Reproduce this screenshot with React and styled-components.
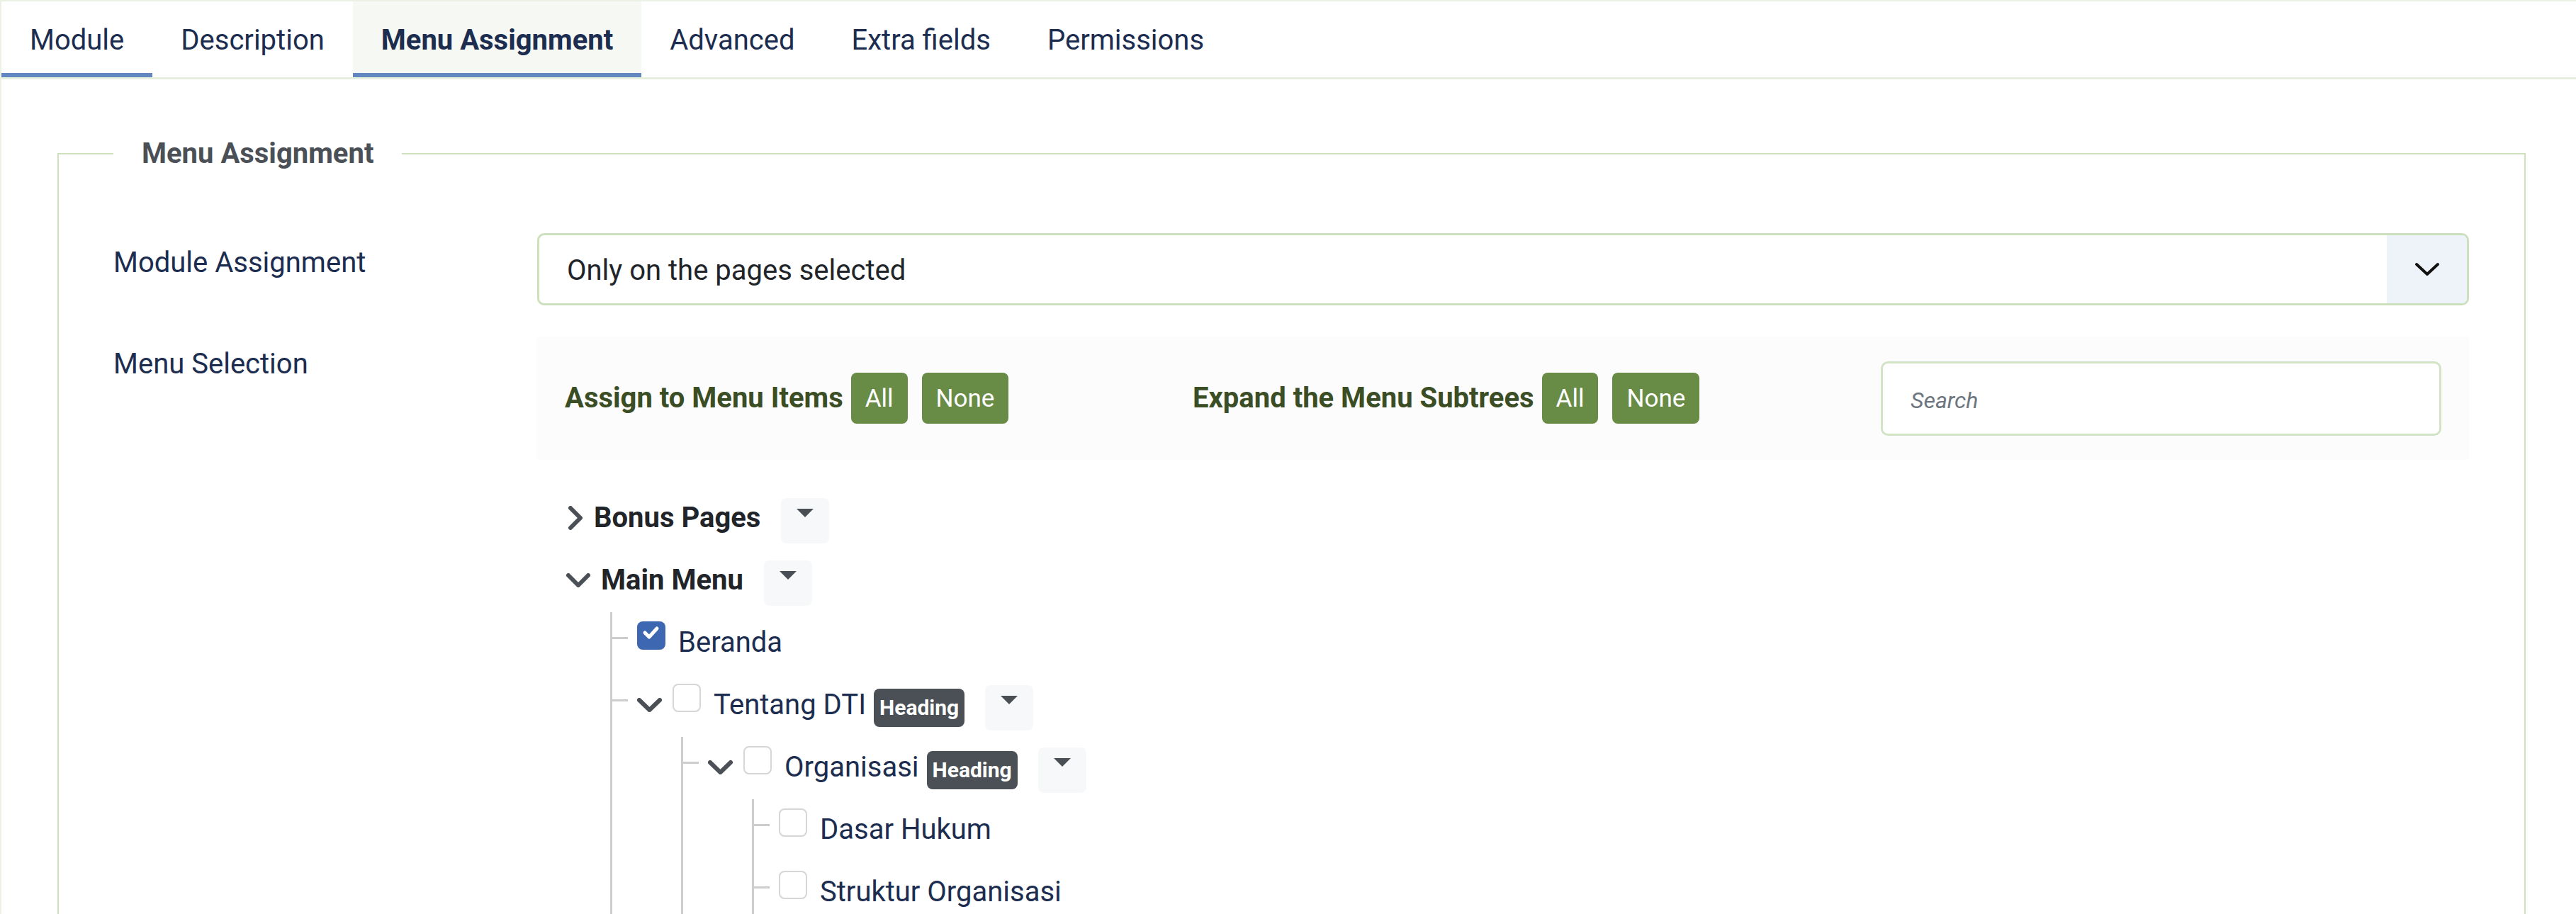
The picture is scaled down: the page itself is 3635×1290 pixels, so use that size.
import React from "react";
import styled, { createGlobalStyle } from "styled-components";

const GlobalStyle = createGlobalStyle`
  * { box-sizing: border-box; }
  html, body {
    margin: 0;
    padding: 0;
    background: #fff;
  }
  body {
    font-family: Roboto, "Liberation Sans", Arial, sans-serif;
    font-size: 40px;
    line-height: 1.5;
    color: #212529;
  }
`;

const Page = styled.div`
  border-top: 2px solid #ebf1e5;
  border-left: 2px solid #ebf1e5;
`;

const TabList = styled.div`
  display: flex;
  border-bottom: 3px solid #e6eedd;
`;

const Tab = styled.div`
  height: 107px;
  padding: 3px 40px 0;
  display: flex;
  align-items: center;
  font-size: 40px;
  color: #1c2d50;
  font-weight: ${(p) => (p.$active ? 700 : 400)};
  background: ${(p) => (p.$active ? "#f6f8f3" : "transparent")};
  box-shadow: ${(p) => (p.$marked ? "inset 0 -6px 0 #6286c0" : "none")};
`;

const Fieldset = styled.fieldset`
  margin: 75px 71px 0 79px;
  padding: 0 78px 0 77px;
  border: 2px solid #cfe1bf;
  min-width: 0;
`;

const Legend = styled.legend`
  padding: 0 40px;
  font-size: 40px;
  line-height: 60px;
  font-weight: 700;
  color: #4b5057;
`;

const Form = styled.div`
  padding-top: 82px;
`;

const FormRow = styled.div`
  display: grid;
  grid-template-columns: 598px 1fr;
  margin-bottom: 44px;
`;

const Label = styled.div`
  padding-top: ${(p) => p.$top || 12}px;
  line-height: 60px;
  color: #1c2d50;
`;

const Select = styled.div`
  height: 102px;
  display: flex;
  align-items: stretch;
  border: 3px solid #cde0bd;
  border-radius: 10px;
  overflow: hidden;
`;

const SelectValue = styled.div`
  flex: 1;
  display: flex;
  align-items: center;
  padding: 3px 0 0 39px;
  color: #212529;
`;

const SelectArrow = styled.div`
  width: 113px;
  background: #eef2f9;
  display: flex;
  align-items: center;
  justify-content: center;
`;

const Panel = styled.div`
  height: 174px;
  padding: 0 39px;
  background: #fcfcfc;
  display: flex;
  align-items: center;
`;

const Section = styled.div`
  display: flex;
  align-items: center;
  flex: 0 0 ${(p) => p.$width || "auto"};
`;

const SectionLabel = styled.span`
  font-weight: 700;
  color: #3b4d24;
  margin-right: 11px;
`;

const SmallButton = styled.button`
  height: 72px;
  padding: 0 20px;
  margin-right: 20px;
  border: none;
  border-radius: 8px;
  background: #688b46;
  color: #fff;
  font-family: inherit;
  font-size: 35px;
  line-height: 1;
`;

const SearchInput = styled.input`
  margin-left: auto;
  width: 791px;
  height: 105px;
  border: 3px solid #d3e3c5;
  border-radius: 10px;
  padding: 6px 0 0 39px;
  font-family: inherit;
  font-size: 32px;
  font-style: italic;
  background: #fff;
  outline: none;
  &::placeholder {
    color: #6d757e;
  }
`;

const Tree = styled.ul`
  list-style: none;
  margin: 39px 0 0 0;
  padding: 0 0 0 41px;
`;

const SubTree = styled.ul`
  list-style: none;
  margin: 0 0 0 ${(p) => p.$indent}px;
  padding: 0;
  border-left: 3px solid #cdcdcd;
`;

const Item = styled.li``;

const Row = styled.div`
  display: flex;
  align-items: flex-start;
  padding: 13px 0 9px;
  min-height: 88px;
`;

const Tick = styled.span`
  width: 22px;
  height: 3px;
  margin-top: 22px;
  margin-right: 13px;
  background: #cdcdcd;
  flex: none;
`;

const ChevronBox = styled.span`
  height: 60px;
  display: flex;
  align-items: center;
  margin-left: ${(p) => p.$offset || 0}px;
  margin-right: 15px;
  flex: none;
`;

const Checkbox = styled.span`
  width: 40px;
  height: 40px;
  border-radius: 8px;
  flex: none;
  margin-right: 18px;
  background: ${(p) => (p.$checked ? "#3e67b1" : "#fff")};
  border: ${(p) => (p.$checked ? "none" : "2px solid #d4d6d8")};
  display: flex;
`;

const ItemText = styled.span`
  line-height: 60px;
  white-space: nowrap;
  font-weight: ${(p) => (p.$menu ? 700 : 400)};
  color: ${(p) => (p.$menu ? "#212529" : "#1c2d50")};
`;

const Badge = styled.span`
  margin: 7px 0 0 11px;
  height: 54px;
  padding: 0 8px;
  border-radius: 8px;
  background: #4b4f56;
  color: #fff;
  font-size: 30px;
  font-weight: 700;
  line-height: 54px;
`;

const Toggle = styled.span`
  margin: 2px 0 0 29px;
  width: 68px;
  height: 64px;
  border-radius: 8px;
  background: #f7f8fa;
  display: flex;
  justify-content: center;
  padding-top: 15px;
  flex: none;
`;

const ChevronDown = ({ width = 34, color = "#4b4f56", stroke = 6 }) => (
  <svg width={width} height="20" viewBox={`0 0 ${width} 20`}>
    <path
      d={`M3 3 L${width / 2} 17 L${width - 3} 3`}
      fill="none"
      stroke={color}
      strokeWidth={stroke}
      strokeLinecap="round"
      strokeLinejoin="round"
    />
  </svg>
);

const ChevronRight = () => (
  <svg width="22" height="34" viewBox="0 0 22 34">
    <path
      d="M4 3 L18 17 L4 31"
      fill="none"
      stroke="#4b4f56"
      strokeWidth="6"
      strokeLinecap="round"
      strokeLinejoin="round"
    />
  </svg>
);

const Caret = () => (
  <svg width="24" height="12" viewBox="0 0 24 12">
    <polygon points="0,0 24,0 12,12" fill="#4a4e55" />
  </svg>
);

const Check = () => (
  <svg width="40" height="40" viewBox="0 0 40 40">
    <path
      d="M11 16 L17 22 L28 10"
      fill="none"
      stroke="#fff"
      strokeWidth="5"
      strokeLinecap="round"
      strokeLinejoin="round"
    />
  </svg>
);

const tabs = [
  { label: "Module", marked: true },
  { label: "Description" },
  { label: "Menu Assignment", active: true, marked: true },
  { label: "Advanced" },
  { label: "Extra fields" },
  { label: "Permissions" },
];

const menuItems = [
  { title: "Beranda", checked: true },
  {
    title: "Tentang DTI",
    heading: true,
    children: [
      {
        title: "Organisasi",
        heading: true,
        children: [
          { title: "Dasar Hukum" },
          { title: "Struktur Organisasi" },
        ],
      },
    ],
  },
];

const TreeNode = ({ node }) => (
  <Item>
    <Row>
      <Tick />
      {node.children && (
        <ChevronBox>
          <ChevronDown width={35} />
        </ChevronBox>
      )}
      <Checkbox $checked={node.checked}>{node.checked && <Check />}</Checkbox>
      <ItemText>{node.title}</ItemText>
      {node.heading && <Badge>Heading</Badge>}
      {node.children && (
        <Toggle>
          <Caret />
        </Toggle>
      )}
    </Row>
    {node.children && (
      <SubTree $indent={97}>
        {node.children.map((c) => (
          <TreeNode key={c.title} node={c} />
        ))}
      </SubTree>
    )}
  </Item>
);

export default function App() {
  return (
    <>
      <GlobalStyle />
      <Page>
        <TabList>
          {tabs.map((t) => (
            <Tab key={t.label} $active={t.active} $marked={t.marked}>
              {t.label}
            </Tab>
          ))}
        </TabList>

        <Fieldset>
          <Legend>Menu Assignment</Legend>
          <Form>
            <FormRow>
              <Label>Module Assignment</Label>
              <Select>
                <SelectValue>Only on the pages selected</SelectValue>
                <SelectArrow>
                  <ChevronDown width={36} color="#111" stroke={4} />
                </SelectArrow>
              </Select>
            </FormRow>

            <FormRow>
              <Label $top={9}>Menu Selection</Label>
              <div>
                <Panel>
                  <Section $width="886px">
                    <SectionLabel>Assign to Menu Items</SectionLabel>
                    <SmallButton>All</SmallButton>
                    <SmallButton>None</SmallButton>
                  </Section>
                  <Section>
                    <SectionLabel>Expand the Menu Subtrees</SectionLabel>
                    <SmallButton>All</SmallButton>
                    <SmallButton>None</SmallButton>
                  </Section>
                  <SearchInput placeholder="Search" />
                </Panel>

                <Tree>
                  <Item>
                    <Row>
                      <ChevronBox $offset={2}>
                        <ChevronRight />
                      </ChevronBox>
                      <ItemText $menu>Bonus Pages</ItemText>
                      <Toggle>
                        <Caret />
                      </Toggle>
                    </Row>
                  </Item>
                  <Item>
                    <Row>
                      <ChevronBox>
                        <ChevronDown />
                      </ChevronBox>
                      <ItemText $menu>Main Menu</ItemText>
                      <Toggle>
                        <Caret />
                      </Toggle>
                    </Row>
                    <SubTree $indent={62}>
                      {menuItems.map((n) => (
                        <TreeNode key={n.title} node={n} />
                      ))}
                    </SubTree>
                  </Item>
                </Tree>
              </div>
            </FormRow>
          </Form>
        </Fieldset>
      </Page>
    </>
  );
}
